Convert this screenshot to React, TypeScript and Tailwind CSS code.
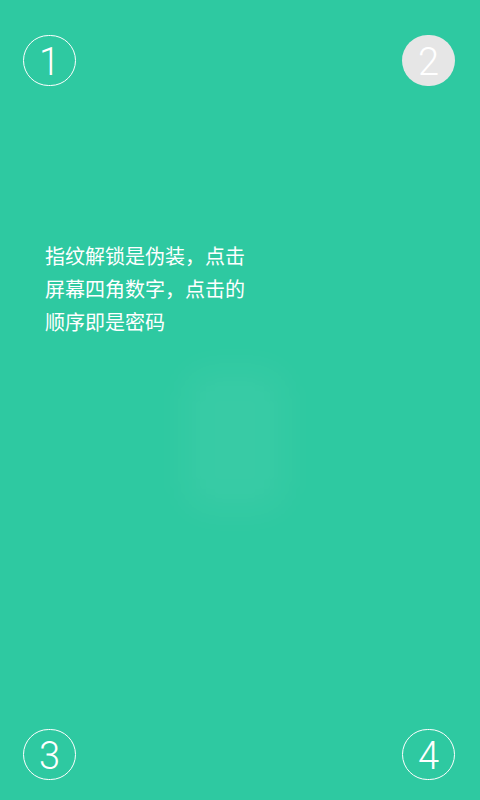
import React from "react";

function Num({ n, filled }: { n: string; filled?: boolean }) {
  return (
    <div
      className={
        "w-[53px] h-[51px] rounded-full flex items-center justify-center text-white text-[38px] font-light leading-none " +
        (filled ? "bg-[#e6e6e6]" : "border-[1.5px] border-white")
      }
      style={{ fontFamily: "Roboto, 'Open Sans', sans-serif" }}
    >
      <span className="mt-[2px]">{n}</span>
    </div>
  );
}

export default function App() {
  return (
    <div className="relative w-[480px] h-[800px] bg-[#2ec9a1] overflow-hidden flex flex-col">
      <div className="absolute left-[185px] top-[370px] w-[100px] h-[140px] bg-white/5 blur-[18px] rounded-[20px]" />
      <div className="flex justify-between pl-[23px] pr-[25px] pt-[35px]">
        <Num n="1" />
        <Num n="2" filled />
      </div>
      <div
        className="mt-[153px] pl-[45px] text-white text-[20px] leading-[33px] relative"
        style={{ fontFamily: "'Noto Sans CJK SC', 'Noto Sans', sans-serif" }}
      >
        <div>指纹解锁是伪装，点击</div>
        <div>屏幕四角数字，点击的</div>
        <div>顺序即是密码</div>
      </div>
      <div className="flex-1" />
      <div className="flex justify-between pl-[23px] pr-[25px] pb-[20px]">
        <Num n="3" />
        <Num n="4" />
      </div>
    </div>
  );
}
